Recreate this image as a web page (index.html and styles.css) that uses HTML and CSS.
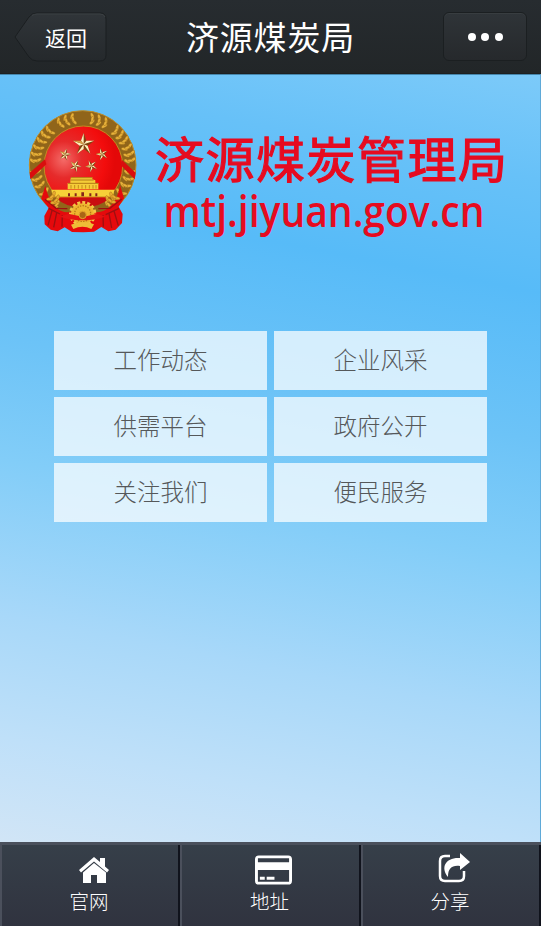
FILE: index.html
```
<!DOCTYPE html>
<html lang="zh-CN">
<head>
<meta charset="utf-8">
<title>济源煤炭局</title>
<link rel="stylesheet" href="styles.css">
</head>
<body>
<header class="topbar">
  <button class="back" aria-label="返回">
    <svg class="back-shape" viewBox="0 0 93 50"><defs><linearGradient id="bk" x1="0" y1="0" x2="0" y2="1"><stop offset="0" stop-color="#303539"/><stop offset="1" stop-color="#25292c"/></linearGradient></defs><path d="M1 25 15 5Q18 1 23 1H86Q92 1 92 7V43Q92 49 86 49H23Q18 49 15 45Z" fill="url(#bk)" stroke="#1a1e20"/><path d="M18 3.5Q20 2 23 2H86Q90 2 91 5" fill="none" stroke="#3b4043"/></svg>
    <span>返回</span>
  </button>
  <h1>济源煤炭局</h1>
  <button class="more" aria-label="更多"><i></i><i></i><i></i></button>
</header>
<main class="page">
  <section class="brand">
    <svg class="emblem" viewBox="0 0 390 420">
      <defs>
        <radialGradient id="disc" cx=".25" cy=".42" r=".65"><stop offset="0" stop-color="#f46b68"/><stop offset=".35" stop-color="#e62b2b"/><stop offset=".8" stop-color="#f30d0d"/><stop offset="1" stop-color="#e40808"/></radialGradient>
        <g id="grain"><ellipse cx="-9" cy="0" rx="4.5" ry="10" transform="rotate(-58 -9 0)"/><ellipse cx="9" cy="-3" rx="4.5" ry="10" transform="rotate(-122 9 -3)"/><ellipse cx="0" cy="-1" rx="8" ry="4"/></g>
        <g id="star"><path d="M0-34 8-11 32-11 12 4 20 28 0 14-20 28-12 4-32-11-8-11Z" fill="#80430f"/><path d="M0-34V0L-8-11ZM32-11 0 0 8-11ZM20 28 0 0 12 4ZM-20 28 0 0 0 14ZM-32-11 0 0-12 4Z" fill="#fff0bd"/><path d="M-32-11 0 0-8-11Z" fill="#d79d42"/></g>
      </defs>
      <ellipse cx="188" cy="195" rx="160" ry="163" fill="#90651a" stroke="#bd8c28" stroke-width="3"/>
      <g fill="#e8b23a" stroke="#8a5b10" stroke-width="1">
        <use href="#grain" transform="translate(158 57) rotate(78)"/><use href="#grain" transform="translate(138 62) rotate(72)"/><use href="#grain" transform="translate(119 70) rotate(64)"/>
        <use href="#grain" transform="translate(88 93) rotate(49)"/><use href="#grain" transform="translate(74 107) rotate(43)"/><use href="#grain" transform="translate(63 124) rotate(34)"/>
        <use href="#grain" transform="translate(54 144) rotate(22)"/><use href="#grain" transform="translate(48 164) rotate(14)"/><use href="#grain" transform="translate(46 183) rotate(4)"/>
        <use href="#grain" transform="translate(47 218) rotate(-8)"/><use href="#grain" transform="translate(52 238) rotate(-15)"/><use href="#grain" transform="translate(61 257) rotate(-25)"/><use href="#grain" transform="translate(74 278) rotate(-32)"/><use href="#grain" transform="translate(92 298) rotate(-38)"/><use href="#grain" transform="translate(111 314) rotate(-50)"/>
        <use href="#grain" transform="translate(218 57) rotate(-78)"/><use href="#grain" transform="translate(238 62) rotate(-72)"/><use href="#grain" transform="translate(257 70) rotate(-64)"/>
        <use href="#grain" transform="translate(288 93) rotate(-49)"/><use href="#grain" transform="translate(302 107) rotate(-43)"/><use href="#grain" transform="translate(313 124) rotate(-34)"/>
        <use href="#grain" transform="translate(322 144) rotate(-22)"/><use href="#grain" transform="translate(328 164) rotate(-14)"/><use href="#grain" transform="translate(330 183) rotate(-4)"/>
        <use href="#grain" transform="translate(329 218) rotate(8)"/><use href="#grain" transform="translate(324 238) rotate(15)"/><use href="#grain" transform="translate(315 257) rotate(25)"/><use href="#grain" transform="translate(302 278) rotate(32)"/><use href="#grain" transform="translate(284 298) rotate(38)"/><use href="#grain" transform="translate(265 314) rotate(50)"/>
      </g>
      <ellipse cx="190" cy="198" rx="118" ry="120" fill="url(#disc)" stroke="#c48a20" stroke-width="3"/>
      <path d="M29 218 75 178 79 193 31 238ZM347 218 306 180 301 194 344 238Z" fill="#d90d0e"/>
      <use href="#star" transform="translate(191 133)"/>
      <use href="#star" transform="translate(135 164) rotate(15) scale(.55)"/><use href="#star" transform="translate(246 163) rotate(-15) scale(.55)"/><use href="#star" transform="translate(166 198) rotate(25) scale(.55)"/><use href="#star" transform="translate(214 198) rotate(-25) scale(.55)"/>
      <path d="M153 232H217V238L226 241V249H235V268H143V249H151V240Z" fill="#f4cd38"/><path d="M151 240H221M144 250H235M153 233H217" stroke="#b27b15" stroke-width="3"/><path d="M153 255V266M164 255V266M175 255V266M186 255V266M197 255V266M208 255V266M219 255V266M228 255V266" stroke="#c58c1b" stroke-width="3"/>
      <path d="M76 257C86 304 109 337 146 337L188 325 231 337C270 334 294 299 300 255L312 295 296 320 308 342 306 369 287 389 265 394 244 381 222 395 190 397 156 396 134 382 113 394 92 389 74 373 73 348 86 324 64 296Z" fill="#e5090c"/>
      <path d="M94 269H283L279 291H98Z" fill="#f7d038"/><path d="M98 291H280" stroke="#c58b1c" stroke-width="3"/><path d="M144 289V280H150V289ZM164 289V280H170V289ZM184 289V277H192V289ZM208 289V280H214V289ZM226 289V280H232V289Z" fill="#84241b"/>
      <path d="M108 293H270Q240 322 188 322T108 293Z" fill="#c90e10"/>
      <path d="M86 325 120 342M297 325 257 344M110 338 101 382M96 332 84 376M127 346 126 380M267 340 275 384M282 333 295 377M249 346 250 380M75 298 108 325 142 326M305 297 270 325 235 326" fill="none" stroke="#9c1011" stroke-width="4"/>
      <g fill="#e9ad32" stroke="#985b0b"><use href="#grain" transform="translate(108 302) rotate(-40)"/><use href="#grain" transform="translate(96 291) rotate(-40)"/><use href="#grain" transform="translate(269 302) rotate(40)"/><use href="#grain" transform="translate(281 291) rotate(40)"/></g>
      <ellipse cx="188" cy="341" rx="35" ry="31" fill="#eeb52f"/><ellipse cx="188" cy="341" rx="37" ry="34" fill="none" stroke="#f4c744" stroke-width="8" stroke-dasharray="9 6"/><circle cx="188" cy="341" r="24" fill="none" stroke="#b77517" stroke-width="4" stroke-dasharray="4 4"/>
      <path d="M119 350 145 341 177 348 202 348 231 341 256 350 229 358 202 361 174 361 146 358Z" fill="#e51313"/>
      <circle cx="188" cy="345" r="11" fill="#aa6515" stroke="#e5a52c" stroke-width="3"/>
      <path d="M153 374Q188 358 222 373L214 387Q188 374 160 387Z" fill="#eebd37"/>
    </svg>
    <svg class="wordmark" viewBox="0 0 365 130">
      <text class="brand-name" x="5" y="57.5" textLength="352">济源煤炭管理局</text>
      <text class="domain" x="13.5" y="107" textLength="321" lengthAdjust="spacingAndGlyphs">mtj.jiyuan.gov.cn</text>
    </svg>
  </section>
  <nav class="menu">
    <a>工作动态</a><a>企业风采</a>
    <a>供需平台</a><a>政府公开</a>
    <a>关注我们</a><a>便民服务</a>
  </nav>
</main>
<footer class="tabs">
  <a class="tab"><svg class="home" viewBox="0 0 32 28"><path d="M16 1 1 14 3 16.5 16 5.5 29 16.5 31 14 27 10.5V2H22V6Z"/><path d="M16 7 5 16.5V27H13V19H19V27H28V16.5Z"/></svg><span>官网</span></a>
  <a class="tab"><svg class="card" viewBox="0 0 38 30"><path fill-rule="evenodd" d="M4 0H34Q38 0 38 4V26Q38 30 34 30H4Q0 30 0 26V4Q0 0 4 0ZM3 3V7H35V3ZM3 15V27H35V15ZM5 22H10V25H5ZM12 22H20V25H12Z"/></svg><span>地址</span></a>
  <a class="tab"><svg class="share" viewBox="0 0 33 30"><path d="M12 3H7Q2 3 2 8V23Q2 28 7 28H21Q26 28 26 23V18" fill="none" stroke="#fff" stroke-width="2.5"/><path d="M22 0 32 9 22 17V13C14 12 10 15 10 24C2 14 8 4 22 5Z"/></svg><span>分享</span></a>
</footer>
</body>
</html>
```
FILE: styles.css
```
* { box-sizing: border-box; }
body {
  margin: 0;
  width: 541px;
  height: 926px;
  display: flex;
  flex-direction: column;
  overflow: hidden;
  font-family: "Noto Sans CJK SC", sans-serif;
}
button { border: 0; padding: 0; font: inherit; color: #fff; background: none; }
.topbar {
  height: 74px;
  display: flex;
  align-items: center;
  justify-content: space-between;
  padding: 0 14px;
  background: linear-gradient(#272c30, #222628);
  border-bottom: 1px solid #1d2021;
  color: #fff;
}
.back { position: relative; width: 93px; height: 50px; font-size: 21px; line-height: 48px; padding-left: 11px; }
.back-shape { position: absolute; left: 0; top: 0; width: 93px; height: 50px; }
.back span { position: relative; }
h1 { margin: 0 0 0 -9px; font-size: 33px; font-weight: 400; letter-spacing: .8px; line-height: 68px; padding-bottom: 2px; }
.more {
  width: 84px;
  height: 49px;
  display: flex;
  justify-content: center;
  align-items: center;
  gap: 5.5px;
  border: 1px solid #1b1f21;
  border-radius: 6px;
  background: linear-gradient(#2f3438, #26292c);
  box-shadow: inset 0 1px #383d40;
}
.more i { width: 8px; height: 8px; border-radius: 50%; background: #fff; }
.page {
  height: 768px;
  border-top: 1px solid #4686ac;
  border-right: 1px solid #5fa9d8;
  background: linear-gradient(191deg, #7ccaf9 0%, #67c1f8 12%, #57bbf8 25%, #6cc3f7 42%, #82cdf8 56%, #a8d8f9 74%, #bfe0f9 88%, #d1e5f6 100%);
}
.brand { height: 256px; display: flex; align-items: flex-start; padding: 25px 0 0 20px; }
.emblem { width: 130px; height: 140px; flex: none; }
.wordmark { width: 365px; height: 130px; flex: none; margin-top: 20px; fill: #e60b20; }
.brand-name { font-size: 49px; font-weight: 400; stroke: #e60b20; stroke-width: 1.1px; }
.domain { font-family: "Open Sans", sans-serif; font-size: 44px; font-weight: 600; }
.menu { display: grid; grid-template-columns: 213px 213px; grid-auto-rows: 59px; gap: 7px; margin-left: 54px; }
.menu a {
  background: rgba(255, 255, 255, .73);
  color: #55585a;
  font-size: 23.5px;
  font-weight: 300;
  line-height: 57px;
  text-align: center;
}
.tabs { height: 84px; display: grid; grid-template-columns: 180px 181px 180px; border-top: 3px solid #4a505c; background: #30343f; }
.tab {
  display: flex;
  flex-direction: column;
  align-items: center;
  padding-top: 11px;
  color: #fff;
  font-size: 19.5px;
  font-weight: 300;
  border-left: 2px solid #4b505c;
  border-right: 2px solid #10131c;
  background: linear-gradient(#363f49, #30333f);
}
.tab svg { fill: #fff; flex: none; }
.tab .home { width: 32px; height: 28px; margin-left: 7px; }
.tab .card { width: 37px; height: 30px; margin: -1px 0 0 5px; }
.tab .share { width: 33px; height: 30px; margin: -3px 0 0 6px; }
.tab span { line-height: 28px; margin: 3px 2px 0 0; }
.tab .card + span { margin-top: 2px; }
.tab .share + span { margin-top: 4px; }
```
